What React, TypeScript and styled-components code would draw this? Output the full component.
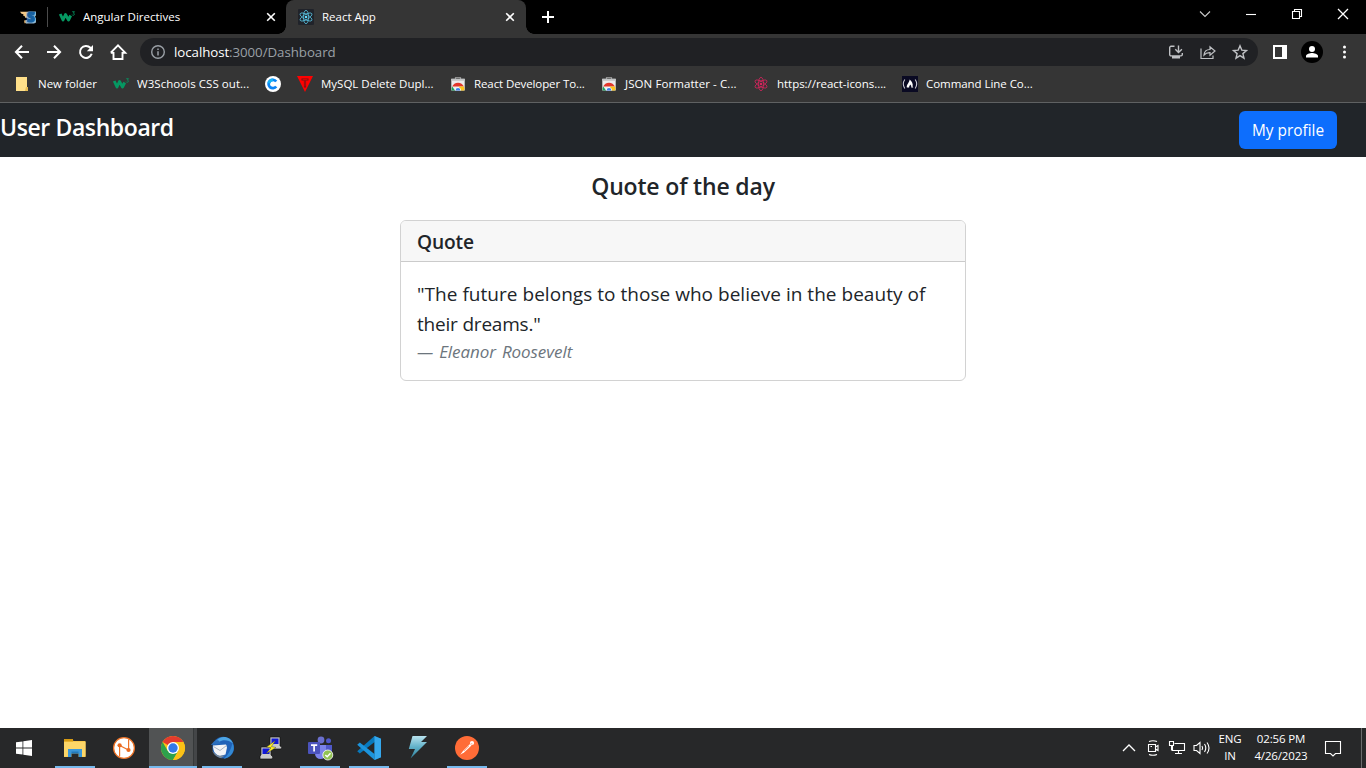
import React from "react";
import styled, { createGlobalStyle } from "styled-components";

const GlobalStyle = createGlobalStyle`
  * { box-sizing: border-box; }
  html, body { margin: 0; padding: 0; }
  body {
    width: 1366px;
    height: 768px;
    overflow: hidden;
    background: #fff;
    font-family: "Open Sans", "Noto Sans", sans-serif;
  }
  svg { display: block; flex: none; overflow: visible; }
`;

const Screen = styled.div`
  width: 1366px;
  height: 768px;
  display: flex;
  flex-direction: column;
`;

/* Spans have a set width so that neighbours keep their place; spacing tunes the glyph run. */
const Label = styled.span<{ $w?: number; $ls?: number }>`
  display: block;
  flex: none;
  white-space: nowrap;
  width: ${(p) => (p.$w ? `${p.$w}px` : "auto")};
  letter-spacing: ${(p) => p.$ls ?? 0}px;
`;

/* ---------- browser window ---------- */

const TabStrip = styled.div`
  height: 34px;
  background: #000;
  display: flex;
  align-items: stretch;
  color: #fff;
  font-size: 11.5px;
  line-height: 34px;
`;

const PinnedTab = styled.div`
  width: 47px;
  padding: 9px 0 0 20px;
`;

const TabDivider = styled.div`
  width: 1px;
  height: 20px;
  margin-top: 7px;
  background: #4b4b4b;
`;

const Tab = styled.div<{ $active?: boolean }>`
  width: ${(p) => (p.$active ? 240 : 238)}px;
  padding: 0 ${(p) => (p.$active ? 11 : 10)}px 0 ${(p) => (p.$active ? 12 : 11)}px;
  display: flex;
  align-items: center;
  background: ${(p) => (p.$active ? "#353535" : "transparent")};
  border-radius: 8px 8px 0 0;
`;

const TabTitle = styled(Label)`
  margin-left: 8px;
  margin-right: auto;
`;

const TabFoot = styled.div<{ $side: "left" | "right" }>`
  width: 8px;
  height: 8px;
  align-self: flex-end;
  margin-left: ${(p) => (p.$side === "left" ? -8 : 0)}px;
  background: radial-gradient(
    circle at ${(p) => (p.$side === "left" ? "0 0" : "100% 0")},
    transparent 7.5px,
    #353535 8px
  );
`;

const NewTab = styled.div`
  padding: 11px 0 0 8px;
`;

const WindowControls = styled.div`
  margin-left: auto;
  display: flex;
  align-items: flex-start;
  padding: 8px 17px 0 0;
  gap: 34px;
`;

const Toolbar = styled.div`
  height: 36px;
  background: #353535;
  display: flex;
  align-items: center;
  padding: 0 13px 0 14px;
`;

const NavButtons = styled.div`
  display: flex;
  gap: 16px;
  width: 126px;
`;

const Omnibox = styled.div`
  width: 1118px;
  height: 28px;
  border-radius: 14px;
  background: #202124;
  display: flex;
  align-items: center;
  padding: 0 10px;
  font-size: 13.3px;
  line-height: 28px;
  color: #9aa0a6;
`;

const Host = styled(Label)`
  margin-left: 8px;
  color: #fff;
`;

const OmniActions = styled.div`
  display: flex;
  gap: 16px;
  margin-left: auto;
`;

const ToolbarEnd = styled.div`
  display: flex;
  align-items: center;
  margin-left: 15px;
  gap: 14px;
`;

const Bookmarks = styled.div`
  height: 33px;
  background: #353535;
  border-bottom: 1px solid #5f6162;
  display: flex;
  gap: 16px;
  padding: 0 14px 4px;
`;

const Bookmark = styled.div`
  display: flex;
  align-items: center;
  gap: 8px;
  color: #fff;
  font-size: 11.5px;
  line-height: 28px;
`;

/* ---------- page ---------- */

const PageHeader = styled.header`
  height: 54px;
  background: #212529;
  display: flex;
  justify-content: space-between;
  padding: 8px 29px 0 0;
`;

const PageTitle = styled.h1`
  margin: 2px 0 0;
  color: #fff;
  font-size: 23px;
  font-weight: 600;
  line-height: 29px;
  letter-spacing: -0.4px;
`;

const ProfileButton = styled.button`
  width: 98px;
  height: 38px;
  border: 0;
  border-radius: 6px;
  padding: 1px 0 0;
  background: #0d6efd;
  color: #fff;
  font: 400 15.4px/37px "Open Sans", sans-serif;
`;

const Page = styled.main`
  flex: 1;
  background: #fff;
  color: #212529;
  display: flex;
  flex-direction: column;
  align-items: center;
`;

const SectionTitle = styled.h2`
  margin: 15px 0 19px;
  font-size: 23px;
  font-weight: 600;
  line-height: 29px;
  letter-spacing: -0.17px;
`;

const Card = styled.section`
  width: 566px;
  height: 161px;
  border: 1px solid #d2d2d2;
  border-radius: 6px;
  overflow: hidden;
`;

const CardHeader = styled.div`
  height: 41px;
  padding: 9px 16px 0;
  background: #f7f7f7;
  border-bottom: 1px solid #cbcbcb;
  font-size: 19.2px;
  font-weight: 600;
  line-height: 24px;
  letter-spacing: -0.15px;
`;

const CardBody = styled.blockquote`
  margin: 0;
  padding: 17px 16px 15px;
`;

const QuoteLine = styled.p<{ $ls?: number }>`
  margin: 0;
  font-size: 19px;
  font-weight: 400;
  line-height: 30px;
  white-space: nowrap;
  letter-spacing: ${(p) => p.$ls ?? 0}px;
`;

const Author = styled.footer`
  font-size: 17px;
  font-style: italic;
  line-height: 25px;
  color: #6c757d;
  letter-spacing: -0.05px;
  word-spacing: 1.5px;
`;

/* ---------- taskbar ---------- */

const Taskbar = styled.div`
  height: 40px;
  background: #272829;
  display: flex;
`;

const StartButton = styled.div`
  width: 50px;
  padding: 12px 0 0 16px;
`;

const TaskItem = styled.div<{ $open?: boolean; $active?: boolean }>`
  width: 49px;
  height: 40px;
  display: flex;
  flex-direction: column;
  align-items: center;
  justify-content: space-between;
  padding-top: 8px;
  background: ${(p) =>
    p.$active
      ? "linear-gradient(90deg, transparent 1px, #515354 1px 45px, #36393a 45px 46px, #444648 46px)"
      : "transparent"};
  &::after {
    content: "";
    height: 2px;
    width: ${(p) => (p.$active ? 48 : 40)}px;
    margin-left: ${(p) => (p.$active ? 1 : 0)}px;
    background: ${(p) => (p.$open ? "#76b9ed" : "transparent")};
  }
`;

const Tray = styled.div`
  margin-left: auto;
  display: flex;
  align-items: center;
  color: #fff;
  font-size: 11.5px;
`;

const TrayIcons = styled.div`
  display: flex;
  align-items: center;
  gap: 8px;
  width: 96px;
`;

const TrayText = styled.div<{ $w: number; $ls: number }>`
  width: ${(p) => p.$w}px;
  text-align: center;
  line-height: 17px;
  letter-spacing: ${(p) => p.$ls}px;
  padding-bottom: 2px;
  white-space: nowrap;
`;

const Notifications = styled.div`
  margin-left: 5px;
`;

const PeekEdge = styled.div`
  width: 5px;
  height: 40px;
  border-left: 1px solid #6a6b6c;
  margin-left: 19px;
`;

/* ---------- drawings ---------- */

const W3 = () => (
  <svg width="16" height="16" viewBox="0 0 16 16">
    <path d="M1.200 5L4 11 6.500 5.500 9.500 11 11.700 6.500" fill="none" stroke="#059862" strokeWidth="2.900" strokeLinejoin="round" />
    <path d="M13.200 2.700h2.300l-1.200 1.400c1.600.2 1.400 2.200-.1 2.200-.6 0-1-.2-1.200-.6" fill="none" stroke="#059862" strokeWidth=".8" />
  </svg>
);

const Atom = ({ color, box }: { color: string; box?: boolean }) => (
  <svg width="16" height="16" viewBox="0 0 16 16">
    {box && <rect width="16" height="16" rx="1" fill="#20232a" />}
    <g fill="none" stroke={color} strokeWidth=".8" opacity={box ? 0.85 : 1}>
      {[0, 60, 120].map((a) => (
        <ellipse key={a} cx="8" cy="8" rx="6.700" ry="2.600" transform={`rotate(${a + 30} 8 8)`} />
      ))}
    </g>
    <circle cx="8" cy="8" r="1.300" fill={color} />
  </svg>
);

const SLogo = () => (
  <svg width="17" height="16" viewBox="0 0 17 16">
    <path d="M0 2.800h8v5L5.500 9 4.500 7 3 6.500 3.500 5.300 1.500 4.800z" fill="#f3c888" />
    <path d="M4 11.500l4-.5 1 3-4.500.2z" fill="#dca860" />
    <path d="M6.500 3.500L8.500 2.500h7.500v4l-1 1 1 2v4l-2 1H6l-.8-3 2.500-1-1.500-2z" fill="#8fb4cf" />
    <text x="10.800" y="13.200" textAnchor="middle" fontFamily="Open Sans" fontSize="13.500" fontWeight="800" fill="#1660a0" stroke="#1660a0" strokeWidth="1.200">S</text>
  </svg>
);

const Close = () => (
  <svg width="10" height="10" viewBox="0 0 10 10">
    <path d="M1.200 1.200l7.600 7.600M8.800 1.200L1.200 8.800" stroke="#fff" strokeWidth="1.600" />
  </svg>
);

const WebStore = () => (
  <svg width="16" height="16" viewBox="0 0 16 16">
    <path d="M5.500 3.200V1.500h5v1.700" fill="none" stroke="#8e8e8e" strokeWidth="1.200" />
    <path d="M1.300 2.800h13.400v11.700H1.300z" fill="#ececec" />
    <path d="M1.300 2.800h13.400v2H1.300z" fill="#c2c4c5" />
    <path d="M2.200 10.500a6.300 6.300 0 0 1 11.600 0z" fill="#e2372c" />
    <path d="M2.200 10.500L5 14.500H1.700a6.300 6.300 0 0 1 .5-4z" fill="#1aa15c" />
    <path d="M9 10.500h4.800a6.300 6.300 0 0 1 .5 4H10z" fill="#fcc31a" />
    <path d="M5 14.500a3 3 0 1 1 6 0z" fill="#fff" />
    <path d="M5.600 14.500a2.400 2.400 0 1 1 4.800 0z" fill="#3f80ec" />
  </svg>
);

const FolderMark = () => (
  <svg width="16" height="16" viewBox="0 0 16 16">
    <path d="M2 1h11v10l1 1v3H2z" fill="#ffe08a" />
    <path d="M12 11h2v4h-3z" fill="#e8bd55" />
  </svg>
);

const CircleC = () => (
  <svg width="16" height="16" viewBox="0 0 16 16">
    <circle cx="8" cy="8" r="8" fill="#fff" />
    <path d="M11.200 5.500a4.200 4.200 0 1 0 0 5" fill="none" stroke="#0b84f5" strokeWidth="2.800" />
    <path d="M3.900 7.200a4.200 4.200 0 0 1 4.100-3.400" fill="none" stroke="#15b4f5" strokeWidth="2.800" />
  </svg>
);

const TriangleT = () => (
  <svg width="16" height="16" viewBox="0 0 16 16">
    <path d="M0 0h16L8 16z" fill="#f00" />
    <path d="M4.500 3.500h7M8 3.500v8" fill="none" stroke="#6b1616" strokeWidth="2.200" />
    <path d="M5.500 3.500h5M8 3.500v7" fill="none" stroke="#e00" strokeWidth=".8" />
  </svg>
);

const Camp = () => (
  <svg width="16" height="16" viewBox="0 0 16 16">
    <rect width="16" height="16" fill="#0a0a23" />
    <path d="M2.800 3.500q-3 4.500 0 9M13.200 3.500q3 4.500 0 9" fill="none" stroke="#c9c9d2" strokeWidth="1.100" />
    <path d="M7.600 3.600c2.400 2 3.600 4.400 3 7l.8 1H9.200c.4-1.500-.2-2.400-1-3.200-.3 1.200-1.400 1.600-1 3.200H4.800C4.300 8.600 7.300 7.200 7.600 3.600z" fill="#fff" />
  </svg>
);

const line = { fill: "none", stroke: "#fff", strokeWidth: 2 } as const;
const soft = { fill: "none", stroke: "#bfc1c4", strokeWidth: 1.4 } as const;

const Back = ({ flip }: { flip?: boolean }) => (
  <svg width="16" height="16" viewBox="0 0 16 16">
    <path d="M15 8H2.500M8 1.700L1.900 8 8 14.300" {...line} transform={flip ? "rotate(180 8 8)" : undefined} />
  </svg>
);

const Reload = () => (
  <svg width="16" height="16" viewBox="0 0 16 16">
    <path d="M13.700 9.800a6 6 0 1 1-1.300-6L13.500 5" {...line} />
    <path d="M15 1v6.200H8.800z" fill="#fff" />
  </svg>
);

const House = () => (
  <svg width="16" height="16" viewBox="0 0 16 16">
    <path d="M3.500 8v7h9V8M.8 8.700L8 1.400l7.200 7.300H12.500M.8 8.700h2.700" {...line} strokeWidth={1.900} />
  </svg>
);

const Info = () => (
  <svg width="16" height="16" viewBox="0 0 16 16">
    <circle cx="8" cy="8" r="6.300" {...soft} stroke="#9aa0a6" />
    <path d="M8 7.200v4.200M8 4.500v1.600" stroke="#9aa0a6" strokeWidth="1.500" />
  </svg>
);

const Install = () => (
  <svg width="16" height="16" viewBox="0 0 16 16">
    <path d="M6.500 2.300H3A1.300 1.300 0 0 0 1.700 3.600v7A1.300 1.300 0 0 0 3 11.900h10a1.300 1.300 0 0 0 1.300-1.300V9M10.500 1.500v6.800M7.300 5.300l3.200 3.200 3.400-3.200" {...soft} />
    <path d="M4 12h8v2.500H4z" fill="#bfc1c4" />
  </svg>
);

const Share = () => (
  <svg width="16" height="16" viewBox="0 0 16 16">
    <path d="M1 4.500v10h12v-3" {...soft} strokeWidth={1.200} />
    <path d="M4 11c.3-3.600 2.400-5.400 6-5.500V2.700L15 7l-5 4.200V8.600C7.300 8.500 5.500 9.200 4 11z" {...soft} strokeWidth={1.200} />
  </svg>
);

const Star = () => (
  <svg width="16" height="16" viewBox="0 0 16 16">
    <path d="M8 1.800l1.800 4.300 4.700.4-3.600 3.100 1.100 4.600L8 11.700l-4 2.500 1.100-4.600-3.600-3.100 4.700-.4z" {...soft} />
  </svg>
);

const SidePanel = () => (
  <svg width="14" height="14" viewBox="0 0 14 14">
    <path d="M0 0h14v14H0zM2 2v10h7V2z" fill="#fff" fillRule="evenodd" />
  </svg>
);

const Avatar = () => (
  <svg width="22" height="22" viewBox="0 0 22 22">
    <circle cx="11" cy="11" r="11" fill="#000" />
    <circle cx="11" cy="8" r="3" fill="#fff" />
    <path d="M5 16.500v-1.500c0-2 4-3 6-3s6 1 6 3v1.500z" fill="#fff" />
  </svg>
);

const Dots = () => (
  <svg width="16" height="16" viewBox="0 0 16 16">
    {[3, 8, 13].map((y) => (
      <circle key={y} cx="7.500" cy={y} r="1.500" fill="#fff" />
    ))}
  </svg>
);

const WindowsLogo = () => (
  <svg width="16" height="16" viewBox="0 0 16 16" fill="#fff">
    <path d="M0 2.300L6.500 1.400v6.200H0zM7.300 1.300L16 0v7.600H7.300zM0 8.400h6.500v6.200L0 13.700zM7.300 8.400H16V16l-8.700-1.300z" />
  </svg>
);

const Explorer = () => (
  <svg width="24" height="24" viewBox="0 0 24 24">
    <path d="M1 3h8l1.500 2H22.500v16H1z" fill="#f9c94d" />
    <path d="M1 3h9v2.500H1z" fill="#d79b13" />
    <path d="M1 6h21.500v14.500H1z" fill="#fcd668" />
    <path d="M5 21v-8h14v8h-3.500v-3.500h-7V21z" fill="#3a97d9" />
    <path d="M8.500 17.500h7V21h-7z" fill="#272829" />
    <path d="M8.500 15.500h7v2h-7z" fill="#2278b8" />
  </svg>
);

const NotesApp = () => (
  <svg width="24" height="24" viewBox="0 0 24 24">
    <circle cx="12" cy="12" r="10.400" fill="#fff" stroke="#ee7327" strokeWidth="1.300" />
    <path d="M7.600 20.500V9.400l9 4.600V3.200" fill="none" stroke="#ee7327" strokeWidth="1.200" />
    <circle cx="7.600" cy="9.300" r="2.100" fill="#ea6a20" />
    <circle cx="16.500" cy="14" r="2.100" fill="#ea6a20" />
  </svg>
);

const Chrome = () => (
  <svg width="24" height="24" viewBox="0 0 24 24">
    <circle cx="12" cy="12" r="12" fill="#fbc116" />
    <path d="M12 12L1.600 6A12 12 0 0 1 22.400 6z" fill="#e33b2e" />
    <path d="M1.600 6A12 12 0 0 0 12 24l5.200-9H12L6.800 15z" fill="#2da14c" />
    <path d="M12 6h10.400a12 12 0 0 1-10.400 18l5.200-9z" fill="#fbc116" />
    <circle cx="12" cy="12" r="6" fill="#fff" />
    <circle cx="12" cy="12" r="4.700" fill="#3379e8" />
  </svg>
);

const Thunderbird = () => (
  <svg width="24" height="24" viewBox="0 0 24 24">
    <circle cx="13.200" cy="11.500" r="10.800" fill="#1f62b8" />
    <path d="M6 5C11-1 20 0 23 7.500 19 4 13 3 9 6z" fill="#4da5e4" />
    <path d="M22.500 7c4 8-2 15-9 16 4-3 7.500-9 9-16z" fill="#3389d4" />
    <path d="M3 9.500L16 8.500l1 3-1.500 7-5.500 1.500C5.500 19 3 15.500 3 9.500z" fill="#f3f4f6" />
    <path d="M3.500 10.500l6.500 4 6.500-5" fill="none" stroke="#a8b3c2" strokeWidth="1" />
    <path d="M.8 9L4 5.500 8 4l3 3.500z" fill="#2b6fbd" />
    <path d="M2 14c1 4 5 7.500 9 8l4-2.500-6 .3c-3.500-1-5.500-3-7-5.800z" fill="#7a8896" />
  </svg>
);

const Putty = () => (
  <svg width="24" height="24" viewBox="0 0 24 24">
    <g stroke="#111" strokeWidth=".7">
      <path d="M11 1h10v9l2 1-1 2H10l2-3h-1z" fill="#c9c9c9" />
      <path d="M2 11h10v8l2 2-1 2H1v-3l1-1z" fill="#c9c9c9" />
    </g>
    <path d="M12.500 2.500h7V8h-7zM3.500 12.500h7V18h-7z" fill="#1118d8" />
    <path d="M16.500 4.500l-9 6.500 4.500.8-5 6 10-6.300-4.500-1z" fill="#ffef20" stroke="#333" strokeWidth=".4" />
  </svg>
);

const Teams = () => (
  <svg width="26" height="24" viewBox="0 0 26 24">
    <circle cx="14" cy="4" r="3.400" fill="#6b70cf" />
    <circle cx="21.500" cy="4.700" r="2.500" fill="#5059c9" />
    <path d="M17 9h8v7a4.500 4.500 0 0 1-8 2z" fill="#5059c9" />
    <path d="M8 9h11v8.500a5.500 5.500 0 0 1-11 0z" fill="#7b83eb" />
    <rect x="1" y="6" width="12" height="12" rx="1" fill="#4b53bc" />
    <path d="M4 9.200h6.200M7.100 9.200v6.300" stroke="#fff" strokeWidth="1.700" />
    <circle cx="20.800" cy="19" r="5" fill="#92c353" stroke="#fff" strokeWidth=".8" />
    <path d="M18.300 19l1.900 1.800 3.300-3.500" fill="none" stroke="#fff" strokeWidth="1.500" />
  </svg>
);

const VsCode = () => (
  <svg width="24" height="24" viewBox="0 0 24 24">
    <path d="M17.500 0L24 2.800v18.400L17.500 24 17.600 6 2.800 17.600.2 15.300z" fill="#0879bd" />
    <path d="M2.800 6.400L.2 8.700 17.500 24V18z" fill="#1c94dc" />
    <path d="M17.500 0L24 2.800v18.400L17.500 24z" fill="#35a8ed" />
  </svg>
);

const Bolt = () => (
  <svg width="24" height="24" viewBox="0 0 24 24">
    <defs>
      <linearGradient id="bolt" x1="0" y1="0" x2="0" y2="1">
        <stop offset="0" stopColor="#b9e3ee" />
        <stop offset=".5" stopColor="#5fb0c8" />
        <stop offset="1" stopColor="#2f7f9b" />
      </linearGradient>
    </defs>
    <path d="M6.500 0H21l-6 6h6L4.500 22.500 9 13H2.800z" fill="url(#bolt)" />
  </svg>
);

const Postman = () => (
  <svg width="24" height="24" viewBox="0 0 24 24">
    <circle cx="12" cy="12" r="12" fill="#ff6c37" />
    <path d="M5.200 18.700L8 15l7-7 1.500 1.500-7.200 6.800z" fill="#fff" />
    <circle cx="17" cy="7" r="2.100" fill="#fff" />
    <path d="M9 15l5-5M15.800 7.400l1.800.6" stroke="#ff6c37" strokeWidth=".5" />
  </svg>
);

const trayLine = { fill: "none", stroke: "#fff", strokeWidth: 1.1 } as const;

const bookmarks = [
  { icon: <FolderMark />, text: "New folder", w: 59 },
  { icon: <W3 />, text: "W3Schools CSS out...", w: 112, ls: 0.05 },
  { icon: <CircleC /> },
  { icon: <TriangleT />, text: "MySQL Delete Dupl...", w: 113 },
  { icon: <WebStore />, text: "React Developer To...", w: 111, ls: -0.1 },
  { icon: <WebStore />, text: "JSON Formatter - C...", w: 112, ls: 0.08 },
  { icon: <Atom color="#d3245c" />, text: "https://react-icons....", w: 109, ls: -0.04 },
  { icon: <Camp />, text: "Command Line Co...", w: 107, ls: -0.05 },
];

const tasks = [
  { icon: <Explorer />, open: true },
  { icon: <NotesApp /> },
  { icon: <Chrome />, open: true, active: true },
  { icon: <Thunderbird />, open: true },
  { icon: <Putty /> },
  { icon: <Teams />, open: true },
  { icon: <VsCode />, open: true },
  { icon: <Bolt /> },
  { icon: <Postman />, open: true },
];

export default function App() {
  return (
    <Screen>
      <GlobalStyle />
      <TabStrip>
        <PinnedTab><SLogo /></PinnedTab>
        <TabDivider />
        <Tab>
          <W3 />
          <TabTitle>Angular Directives</TabTitle>
          <Close />
        </Tab>
        <TabFoot $side="left" />
        <Tab $active>
          <Atom color="#61dafb" box />
          <TabTitle>React App</TabTitle>
          <Close />
        </Tab>
        <TabFoot $side="right" />
        <NewTab>
          <svg width="12" height="12" viewBox="0 0 12 12"><path d="M6 0v12M0 6h12" {...line} /></svg>
        </NewTab>
        <WindowControls>
          <svg width="12" height="12" viewBox="0 0 12 12"><path d="M1 3.500l5 5 5-5" {...trayLine} stroke="#ccc" /></svg>
          <svg width="12" height="12" viewBox="0 0 12 12"><path d="M1 6.500h10" {...trayLine} /></svg>
          <svg width="12" height="12" viewBox="0 0 12 12"><path d="M1.500 3.500h7v7h-7zM3.500 3.500v-2h7v7h-2" {...trayLine} /></svg>
          <svg width="12" height="12" viewBox="0 0 12 12"><path d="M1 1l10 10M11 1L1 11" {...trayLine} strokeWidth={1.300} /></svg>
        </WindowControls>
      </TabStrip>
      <Toolbar>
        <NavButtons><Back /><Back flip /><Reload /><House /></NavButtons>
        <Omnibox>
          <Info />
          <Host $w={55} $ls={-0.05}>localhost</Host>
          <Label $ls={-0.05}>:3000/Dashboard</Label>
          <OmniActions><Install /><Share /><Star /></OmniActions>
        </Omnibox>
        <ToolbarEnd><SidePanel /><Avatar /><Dots /></ToolbarEnd>
      </Toolbar>
      <Bookmarks>
        {bookmarks.map((b, i) => (
          <Bookmark key={i}>
            {b.icon}
            {b.text && <Label $w={b.w} $ls={b.ls}>{b.text}</Label>}
          </Bookmark>
        ))}
      </Bookmarks>
      <PageHeader>
        <PageTitle>User Dashboard</PageTitle>
        <ProfileButton>My profile</ProfileButton>
      </PageHeader>
      <Page>
        <SectionTitle>Quote of the day</SectionTitle>
        <Card>
          <CardHeader>Quote</CardHeader>
          <CardBody>
            <QuoteLine $ls={0.03}>"The future belongs to those who believe in the beauty of</QuoteLine>
            <QuoteLine $ls={-0.2}>their dreams."</QuoteLine>
            <Author>— Eleanor Roosevelt</Author>
          </CardBody>
        </Card>
      </Page>
      <Taskbar>
        <StartButton><WindowsLogo /></StartButton>
        {tasks.map((t, i) => (
          <TaskItem key={i} $open={t.open} $active={t.active}>{t.icon}</TaskItem>
        ))}
        <Tray>
          <TrayIcons>
            <svg width="16" height="16" viewBox="0 0 16 16"><path d="M2 11l6-6 6 6" {...trayLine} strokeWidth={1.300} /></svg>
            <svg width="16" height="16" viewBox="0 0 16 16">
              <path d="M3.500 4.500h7v7h-7zM10.500 7l2.500-1.500v5L10.500 9M4 1.500q4-1.600 8 0M4 14.500q4 1.600 8 0M5.500 6.500h1.500" {...trayLine} />
            </svg>
            <svg width="16" height="16" viewBox="0 0 16 16">
              <path d="M5.500 3.500h10v7h-12V6M.5 1.500h4v4h-4zM2.500 5.500v5M9.500 10.500v3M6 13.500h7" {...trayLine} />
            </svg>
            <svg width="18" height="16" viewBox="0 0 18 16">
              <path d="M1 5.500h2.500l3.500-3v11l-3.500-3H1zM9 6q1.300 2 0 4M11.500 4q2.600 4 0 8M14 2.500q4 5.500 0 11" {...trayLine} />
            </svg>
          </TrayIcons>
          <TrayText $w={26} $ls={-0.2}>ENG<br />IN</TrayText>
          <TrayText $w={76} $ls={-0.15}>02:56 PM<br />4/26/2023</TrayText>
          <Notifications>
            <svg width="18" height="18" viewBox="0 0 18 18">
              <path d="M1.500 2.500h15v12h-5L9 17l-2.500-2.500h-5z" {...trayLine} />
            </svg>
          </Notifications>
          <PeekEdge />
        </Tray>
      </Taskbar>
    </Screen>
  );
}
